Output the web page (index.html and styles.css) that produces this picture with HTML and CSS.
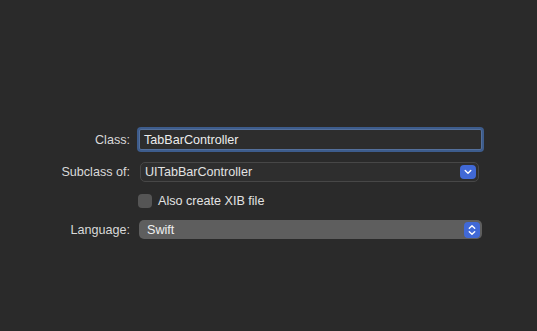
FILE: index.html
```html
<!DOCTYPE html>
<html lang="en">

<head>
  <meta charset="UTF-8" />
  <meta name="viewport" content="width=device-width, initial-scale=1.0" />
  <title>New File Options</title>
  <link rel="stylesheet" href="styles.css">
</head>

<body>
  <div class="sheet">
    <form class="options">
      <label class="label">Class:</label>
      <div class="field-wrap">
        <div class="text-field">TabBarController</div>
      </div>

      <label class="label">Subclass of:</label>
      <div class="combo">
        <span class="combo-text">UITabBarController</span>
        <span class="combo-btn">
          <svg width="8" height="6" viewBox="0 0 8 6"><path d="M1.2 1.6 L4 4.3 L6.8 1.6" fill="none" stroke="#fff" stroke-width="1.4" stroke-linecap="round" stroke-linejoin="round"/></svg>
        </span>
      </div>

      <span></span>
      <div class="check-row">
        <span class="checkbox"></span>
        <span class="check-text">Also create XIB file</span>
      </div>

      <label class="label">Language:</label>
      <div class="popup">
        <span class="popup-text">Swift</span>
        <span class="popup-btn">
          <svg width="8" height="12" viewBox="0 0 8 12"><path d="M1.3 4.3 L4 1.7 L6.7 4.3 M1.3 7.7 L4 10.3 L6.7 7.7" fill="none" stroke="#fff" stroke-width="1.4" stroke-linecap="round" stroke-linejoin="round"/></svg>
        </span>
      </div>
    </form>
  </div>
</body>

</html>
```

FILE: styles.css
```css
* {
  margin: 0;
  padding: 0;
  box-sizing: border-box;
}

body {
  font-family: "Liberation Sans", Arial, sans-serif;
  font-size: 12.6px;
  background-color: #2a2a2a;
  -webkit-font-smoothing: antialiased;
}

.sheet {
  width: 537px;
  height: 331px;
  overflow: hidden;
}

.options {
  display: grid;
  grid-template-columns: 130px auto;
  column-gap: 9px;
  row-gap: 12px;
  align-items: center;
  padding-top: 129px;
}

.label {
  text-align: right;
  color: #d9d9d9;
}

.field-wrap {
  width: 343px;
}

.text-field {
  height: 21px;
  line-height: 20px;
  padding-left: 4px;
  color: #ececec;
  background-color: #2d2d2d;
  border: 1px solid #54709c;
  border-radius: 2px;
  box-shadow: 0 0 0 2px #3d5c8c;
}

.combo {
  display: flex;
  align-items: center;
  justify-content: space-between;
  width: 339px;
  height: 20px;
  margin-left: 1px;
  padding: 0 2px 0 4px;
  color: #e2e2e2;
  background-color: #2e2e2e;
  border: 1px solid #474747;
  border-radius: 5px;
}

.combo-btn {
  display: flex;
  align-items: center;
  justify-content: center;
  width: 16px;
  height: 14px;
  border-radius: 4px;
  background-color: #4169d6;
}

.check-row {
  display: flex;
  align-items: center;
  gap: 6px;
  height: 14px;
  margin-left: -1px;
}

.checkbox {
  width: 14px;
  height: 14px;
  border-radius: 4px;
  background-color: #555;
}

.check-text {
  color: #e2e2e2;
}

.popup {
  display: flex;
  align-items: center;
  justify-content: space-between;
  width: 343px;
  height: 19px;
  padding: 0 2px 0 8px;
  color: #f0f0f0;
  background-color: #5e5e5e;
  border-radius: 5px;
}

.popup-btn {
  display: flex;
  align-items: center;
  justify-content: center;
  width: 16px;
  height: 16px;
  border-radius: 4px;
  background-color: #4169d6;
}
```
